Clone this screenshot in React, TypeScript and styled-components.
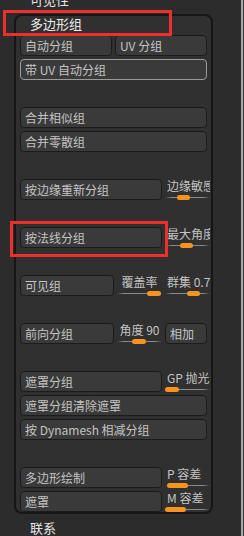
import styled, { createGlobalStyle } from 'styled-components'

const GlobalStyle = createGlobalStyle`
  html, body {
    margin: 0;
    padding: 0;
    background: #2c2c2c;
    overflow: hidden;
  }
  body {
    font-family: "Noto Sans CJK SC", "Noto Sans", sans-serif;
    font-size: 12px;
    color: #c6c6c6;
  }
`

const Page = styled.div`
  position: relative;
  width: 244px;
  height: 536px;
  display: flex;
  overflow: hidden;
`

const Main = styled.div`
  width: 241px;
  display: flex;
  flex-direction: column;
`

const ScrollEdge = styled.div`
  width: 3px;
  background: linear-gradient(to right, #a8a8a8 0, #a8a8a8 2px, #3a3a3a 2px);
`

const SectionLabel = styled.div<{ $mt?: number }>`
  margin-top: ${(p) => p.$mt ?? 0}px;
  padding-left: 30px;
  height: 16px;
  line-height: 16px;
  font-size: 13px;
  color: #e4e4e4;
`

const Panel = styled.div`
  margin: 6px 0 0 14px;
  width: 199px;
  height: 504px;
  box-sizing: border-box;
  border: 2px solid #161616;
  border-radius: 8px;
  background: #303030;
  padding: 0 4px;
  display: flex;
  flex-direction: column;
  gap: 3px;
`

const PanelTitle = styled.div`
  height: 16px;
  line-height: 16px;
  padding-left: 10px;
  font-size: 13px;
  color: #ececec;
`

const Row = styled.div`
  display: flex;
  gap: 3px;
  height: 21px;
`

const Spacer = styled.div`
  height: 21px;
`

const Button = styled.div<{ $w?: number; $active?: boolean }>`
  box-sizing: border-box;
  height: 21px;
  ${(p) => (p.$w ? `width: ${p.$w}px; flex: none;` : 'flex: 1;')}
  border: 1px solid ${(p) => (p.$active ? '#9c9c9c' : '#1c1c1c')};
  border-radius: 4px;
  background: #3a3a3a;
  padding-left: 4px;
  line-height: 19px;
  font-size: 12px;
  color: #c4c4c4;
  white-space: nowrap;
  overflow: hidden;
`

const SliderBox = styled.div<{ $w: number }>`
  position: relative;
  width: ${(p) => p.$w}px;
  flex: none;
  height: 21px;
  overflow: hidden;
`

const SliderText = styled.div<{ $align: 'left' | 'center' }>`
  height: 16px;
  line-height: 14px;
  font-size: 12px;
  color: #c4c4c4;
  white-space: nowrap;
  text-align: ${(p) => p.$align};
  padding-left: ${(p) => (p.$align === 'left' ? 2 : 0)}px;
`

const Track = styled.div`
  position: relative;
  height: 1px;
  margin-top: 2px;
  background: linear-gradient(to right, #2e2e2e, #8a8a8a 15%, #8a8a8a 85%, #2e2e2e);
`

const Thumb = styled.div<{ $x: number; $w: number }>`
  position: absolute;
  left: ${(p) => p.$x}px;
  top: -2px;
  width: ${(p) => p.$w}px;
  height: 5px;
  border-radius: 3px;
  background: #f7931e;
`

const Highlight = styled.div<{ $x: number; $y: number; $w: number; $h: number }>`
  position: absolute;
  left: ${(p) => p.$x}px;
  top: ${(p) => p.$y}px;
  width: ${(p) => p.$w}px;
  height: ${(p) => p.$h}px;
  box-sizing: border-box;
  border: 3px solid #ee2f2c;
  pointer-events: none;
`

function Slider({
  label,
  w,
  x,
  tw,
  align = 'left'
}: {
  label: string
  w: number
  x: number
  tw: number
  align?: 'left' | 'center'
}) {
  return (
    <SliderBox $w={w}>
      <SliderText $align={align}>{label}</SliderText>
      <Track>
        <Thumb $x={x} $w={tw} />
      </Track>
    </SliderBox>
  )
}

export default function App() {
  return (
    <Page>
      <GlobalStyle />
      <Main>
        <SectionLabel $mt={-8}>可见性</SectionLabel>
        <Panel>
          <PanelTitle>多边形组</PanelTitle>
          <Row>
            <Button>自动分组</Button>
            <Button>UV 分组</Button>
          </Row>
          <Row>
            <Button $active>带 UV 自动分组</Button>
          </Row>
          <Spacer />
          <Row>
            <Button>合并相似组</Button>
          </Row>
          <Row>
            <Button>合并零散组</Button>
          </Row>
          <Spacer />
          <Row>
            <Button $w={142}>按边缘重新分组</Button>
            <Slider label="边缘敏感度" w={45} x={12} tw={13} />
          </Row>
          <Spacer />
          <Row>
            <Button $w={142}>按法线分组</Button>
            <Slider label="最大角度" w={45} x={15} tw={13} />
          </Row>
          <Spacer />
          <Row>
            <Button $w={94}>可见组</Button>
            <Slider label="覆盖率" w={45} x={30} tw={14} align="center" />
            <Slider label="群集 0.7" w={45} x={22} tw={13} />
          </Row>
          <Spacer />
          <Row>
            <Button $w={94}>前向分组</Button>
            <Slider label="角度 90" w={45} x={15} tw={14} align="center" />
            <Button>相加</Button>
          </Row>
          <Spacer />
          <Row>
            <Button $w={142}>遮罩分组</Button>
            <Slider label="GP 抛光" w={45} x={0} tw={14} />
          </Row>
          <Row>
            <Button>遮罩分组清除遮罩</Button>
          </Row>
          <Row>
            <Button>按 Dynamesh 相减分组</Button>
          </Row>
          <Spacer />
          <Row>
            <Button $w={142}>多边形绘制</Button>
            <Slider label="P 容差" w={45} x={2} tw={21} />
          </Row>
          <Row>
            <Button $w={142}>遮罩</Button>
            <Slider label="M 容差" w={45} x={0} tw={21} />
          </Row>
        </Panel>
        <SectionLabel $mt={6}>联系</SectionLabel>
      </Main>
      <ScrollEdge />
      <Highlight $x={3} $y={10} $w={169} $h={26} />
      <Highlight $x={10} $y={221} $w={158} $h={36} />
    </Page>
  )
}
